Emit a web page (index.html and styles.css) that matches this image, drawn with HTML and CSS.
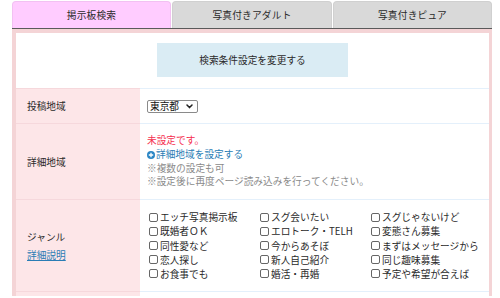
FILE: index.html
```html
<!DOCTYPE html>
<html lang="ja">
<head>
<meta charset="utf-8">
<link rel="stylesheet" href="styles.css">
</head>
<body>
<div class="page">
  <div class="tabs">
    <div class="tab tab-active">掲示板検索</div>
    <div class="tab tab-2">写真付きアダルト</div>
    <div class="tab tab-3">写真付きピュア</div>
  </div>
  <div class="box">
    <div class="btnwrap">
      <div class="btn">検索条件設定を変更する</div>
    </div>
    <table class="form">
      <tr class="row-area">
        <th>投稿地域</th>
        <td>
          <span class="selwrap">
            <select class="sel"><option>東京都</option></select>
            <svg class="chev" width="7" height="5" viewBox="0 0 7 5"><path d="M1 1 L3.5 3.6 L6 1" fill="none" stroke="#222" stroke-width="1.5" stroke-linecap="round" stroke-linejoin="round"/></svg>
          </span>
        </td>
      </tr>
      <tr class="row-detail">
        <th>詳細地域</th>
        <td>
          <div class="red">未設定です。</div>
          <div class="link"><svg class="plus" width="8" height="8" viewBox="0 0 8 8"><circle cx="4" cy="4" r="4" fill="#2b86c5"/><path d="M4 1.8V6.2M1.8 4H6.2" stroke="#fff" stroke-width="1.3"/></svg>詳細地域を設定する</div>
          <div class="note">※複数の設定も可</div>
          <div class="note">※設定後に再度ページ読み込みを行ってください。</div>
        </td>
      </tr>
      <tr class="row-genre">
        <th>ジャンル<br><a class="ulink" href="#">詳細説明</a></th>
        <td>
          <div class="grid">
            <label class="cb"><input type="checkbox">エッチ写真掲示板</label>
            <label class="cb"><input type="checkbox">スグ会いたい</label>
            <label class="cb"><input type="checkbox">スグじゃないけど</label>
            <label class="cb"><input type="checkbox">既婚者ＯＫ</label>
            <label class="cb"><input type="checkbox">エロトーク・TELH</label>
            <label class="cb"><input type="checkbox">変態さん募集</label>
            <label class="cb"><input type="checkbox">同性愛など</label>
            <label class="cb"><input type="checkbox">今からあそぼ</label>
            <label class="cb"><input type="checkbox">まずはメッセージから</label>
            <label class="cb"><input type="checkbox">恋人探し</label>
            <label class="cb"><input type="checkbox">新人自己紹介</label>
            <label class="cb"><input type="checkbox">同じ趣味募集</label>
            <label class="cb"><input type="checkbox">お食事でも</label>
            <label class="cb"><input type="checkbox">婚活・再婚</label>
            <label class="cb"><input type="checkbox">予定や希望が合えば</label>
          </div>
        </td>
      </tr>
      <tr class="row-next">
        <th></th>
        <td></td>
      </tr>
    </table>
  </div>
</div>
</body>
</html>
```

FILE: styles.css
```css
html, body {
  margin: 0;
  padding: 0;
  background: #fff;
}
body {
  font-family: "Noto Sans CJK JP", "Noto Sans", sans-serif;
  font-size: 9.7px;
  color: #2a2a2a;
}
.page {
  width: 480px;
  margin-left: 12px;
  padding-top: 1px;
}
.tabs {
  display: flex;
  gap: 1px;
  height: 27px;
  border-bottom: 1px solid #5a5a5a;
}
.tab {
  box-sizing: border-box;
  display: flex;
  align-items: center;
  justify-content: center;
  border: 1px solid #d0d0d0;
  border-bottom: none;
  border-radius: 4px 4px 0 0;
  background: #d9d9d9;
  color: #2a2a2a;
  letter-spacing: 0.2px;
}
.tab-active {
  width: 159px;
  background: #ffccff;
  border-color: #f2c0f2;
}
.tab-2 {
  width: 160px;
}
.tab-3 {
  flex: 1;
}
.box {
  border: 4px solid #f4d4d6;
  border-right-width: 3px;
  border-bottom: none;
  background: #fff;
}
.btnwrap {
  display: flex;
  justify-content: center;
  padding: 10px 0 11px;
}
.btn {
  width: 191px;
  height: 34px;
  display: flex;
  align-items: center;
  justify-content: center;
  background: #daecf4;
  color: #2a2a2a;
}
.form {
  width: 100%;
  border-collapse: collapse;
}
.form th {
  width: 124px;
  box-sizing: border-box;
  background: #fde6e8;
  text-align: left;
  font-weight: normal;
  padding: 0 0 0 11px;
  vertical-align: middle;
  border-top: 1px solid #f6d8dc;
  line-height: 18px;
}
.form td {
  padding: 0 0 0 7px;
  vertical-align: middle;
  border-top: 1px solid #e4f0fb;
  border-bottom: 1px solid #e4f0fb;
}
.row-area th, .row-area td {
  height: 34px;
}
.row-detail td {
  height: 75px;
  line-height: 13.7px;
}
.row-genre th, .row-genre td {
  height: 91px;
}
.form .row-next th, .form .row-next td {
  height: 4px;
  line-height: 0;
  font-size: 0;
  padding: 0;
  border-bottom: none;
}
.selwrap {
  position: relative;
  display: inline-block;
  vertical-align: middle;
}
.sel {
  appearance: none;
  -webkit-appearance: none;
  width: 51px;
  height: 13px;
  box-sizing: border-box;
  border: 1px solid #8a8a8a;
  border-radius: 2px;
  background: #fff;
  font-family: "Noto Sans CJK JP", sans-serif;
  font-size: 9.7px;
  color: #111;
  padding: 0 0 0 2px;
  line-height: 11px;
  margin: 0;
  display: block;
}
.chev {
  position: absolute;
  right: 5px;
  top: 4px;
}
.red {
  color: #f5304f;
}
.link {
  color: #2a7db5;
  display: flex;
  align-items: center;
}
.plus {
  margin-right: 1px;
}
.note {
  color: #8a8a8a;
}
.ulink {
  color: #2a7db5;
  text-decoration: underline;
}
.grid {
  display: grid;
  grid-template-columns: 111px 111px 111px;
  row-gap: 0;
  padding-left: 2px;
}
.cb {
  display: flex;
  align-items: center;
  height: 14.2px;
  white-space: nowrap;
  color: #2a2a2a;
}
.cb input {
  appearance: none;
  -webkit-appearance: none;
  width: 9px;
  height: 9px;
  box-sizing: border-box;
  border: 1px solid #666;
  border-radius: 2px;
  margin: 0 2px 0 0;
  background: #fff;
}
```
